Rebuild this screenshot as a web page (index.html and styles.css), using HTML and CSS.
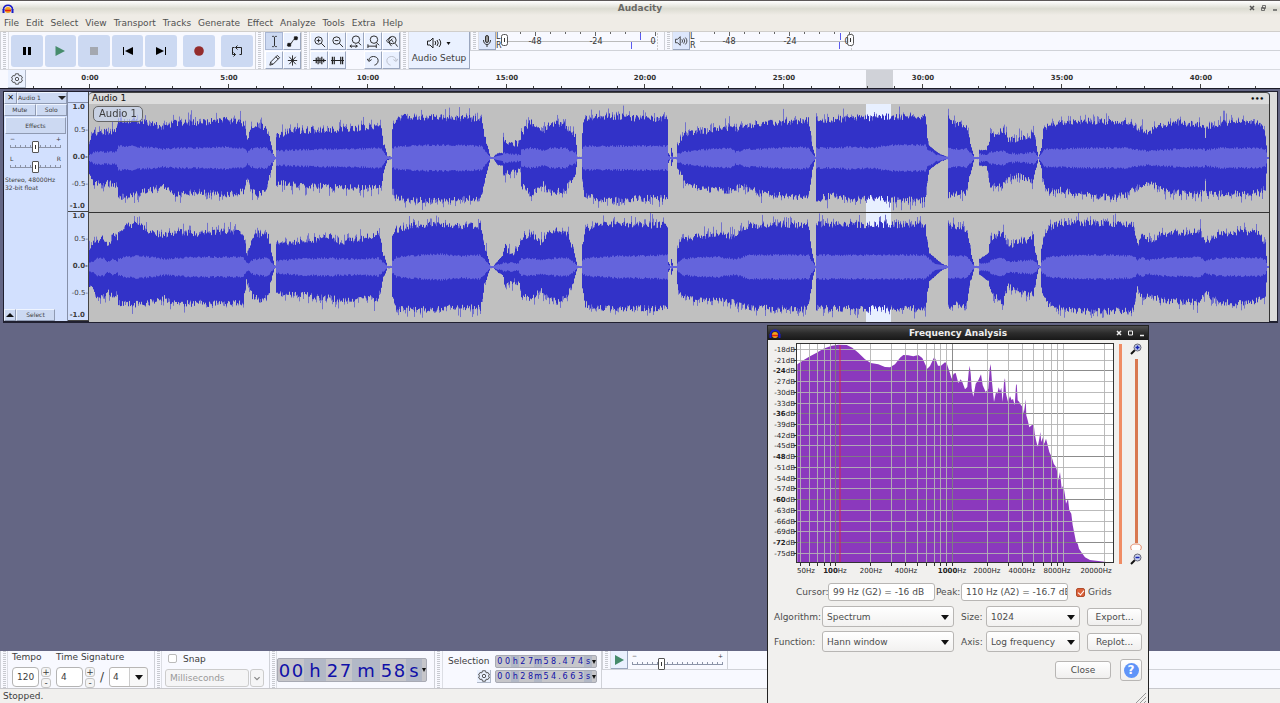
FILE: index.html
```html
<!DOCTYPE html>
<html lang="en">
<head>
    <meta charset="UTF-8">
    <meta name="viewport" content="width=device-width, initial-scale=1.0">
    <title>Audacity</title>
    <link rel="stylesheet" href="styles.css">
</head>
<body>

<header class="titlebar">
    <svg class="logo" width="12" height="11" viewBox="0 0 12 11"><path d="M1.500 7C1 0.500 11 0.500 10.500 7" fill="none" stroke="#1a1ac8" stroke-width="1.500"/><path d="M0.500 6h2v4h-2zM9.500 6h2v4h-2z" fill="#1a1ac8"/><circle cx="6" cy="7" r="3" fill="#f5a31c"/><path d="M3 7.500h6" stroke="#e02010" stroke-width="1.500"/></svg>
    <h1>Audacity</h1>
    <div class="window-buttons">
        <svg width="28" height="8" viewBox="0 0 28 8" fill="none" stroke="#555" stroke-width="1"><path d="M1 2l4 4M5 2L1 6" stroke-width="1.500"/><path d="M13.500 1.500h3v3h-3zM12.500 3.500h3v3h-3z" stroke-width="0.800"/><path d="M24 6h4" stroke-width="1.400"/></svg>
    </div>
</header>

<nav class="menu">
    <button>File</button>
    <button>Edit</button>
    <button>Select</button>
    <button>View</button>
    <button>Transport</button>
    <button>Tracks</button>
    <button>Generate</button>
    <button>Effect</button>
    <button>Analyze</button>
    <button>Tools</button>
    <button>Extra</button>
    <button>Help</button>
</nav>

<div class="toolbars">
    <div class="grip"></div>
    <div class="transport">
        <div class="transport-group">
            <button aria-label="Pause"><svg width="12" height="12" viewBox="0 0 12 12"><path d="M2 2h3v8H2zM7 2h3v8H7z"/></svg></button>
            <button aria-label="Play"><svg width="12" height="12" viewBox="0 0 12 12"><path d="M1.500 1L11 6l-9.500 5z" fill="#468c6c"/></svg></button>
            <button aria-label="Stop"><svg width="12" height="12" viewBox="0 0 12 12"><path d="M2 2h8v8H2z" fill="#a4a8b0"/></svg></button>
            <button aria-label="Skip to start"><svg width="12" height="12" viewBox="0 0 12 12"><path d="M11 2v8L3 6zM1 2h1v8H1z"/></svg></button>
            <button aria-label="Skip to end"><svg width="12" height="12" viewBox="0 0 12 12"><path d="M1 2v8l8-4zM10 2h1v8h-1z"/></svg></button>
        </div>
        <button class="single" aria-label="Record"><svg width="12" height="12" viewBox="0 0 12 12"><circle cx="6" cy="6" r="4.800" fill="#942c2c"/></svg></button>
        <button class="single" aria-label="Loop"><svg width="12" height="12" viewBox="0 0 12 12" fill="none" stroke="#222"><path d="M3.500 2.500h-2v7h3M8.500 9.500h2v-7h-6"/><path d="M6.500 0.500l-2 2 2 2M2.500 7.500l2 2-2 2"/></svg></button>
    </div>
    <div class="grip"></div>
    <div class="tools two">
        <button class="on" aria-label="Selection tool"><svg viewBox="0 0 14 14"><path d="M4.500 1.500H6L7 2.500 8 1.500h1.500M7 2.500v9M4.500 12.500H6L7 11.500l1 1h1.500"/></svg></button>
        <button aria-label="Envelope tool"><svg viewBox="0 0 14 14"><path d="M1 11c6 1 5-8 12-8"/><path d="M2 9h3v3H2zM9 2h3v3H9z" fill="#111"/></svg></button>
        <button aria-label="Draw tool"><svg viewBox="0 0 14 14"><path d="M2 12l1-3.500 7-7 2.500 2.500-7 7zM8.500 3L11 5.500M3 9l2 2"/></svg></button>
        <button aria-label="Multi tool"><svg viewBox="0 0 14 14"><path d="M7 1.500v11M2 7h10M3.500 3l7 8M10.500 3l-7 8"/></svg></button>
    </div>
    <div class="grip"></div>
    <div class="tools five">
        <button aria-label="Zoom in"><svg viewBox="0 0 14 14"><circle cx="6" cy="6" r="4"/><path d="M9 9l4 4M4 6h4M6 4v4"/></svg></button>
        <button aria-label="Zoom out"><svg viewBox="0 0 14 14"><circle cx="6" cy="6" r="4"/><path d="M9 9l4 4M4 6h4"/></svg></button>
        <button aria-label="Fit selection"><svg viewBox="0 0 14 14"><circle cx="7.500" cy="5" r="4"/><path d="M10 8l3 3"/><path d="M1 12h8M3 10.500L1 12l2 1.500M7 10.500L9 12l-2 1.500"/></svg></button>
        <button aria-label="Fit project"><svg viewBox="0 0 14 14"><circle cx="7.500" cy="5" r="4"/><path d="M10 8l3 3M1 10v4M10 10v4M1 12h9"/></svg></button>
        <button aria-label="Zoom toggle"><svg viewBox="0 0 14 14"><circle cx="8" cy="5.500" r="4"/><path d="M11 9l2.500 3.500M6.500 2.500C1 5 0.500 7 4 8l4-4M4 8l3 4M7 5l2 3"/></svg></button>
        <button aria-label="Trim"><svg viewBox="0 0 14 14"><path d="M0 7h14M3.500 4v6M5.500 3v8M7.500 4v6M9.500 3v8M11.500 5v4" stroke-width="1.300"/></svg></button>
        <button aria-label="Silence"><svg viewBox="0 0 14 14"><path d="M0 7h14M1.500 3v8M3.500 3v8M10.500 3v8M12.500 3v8" stroke-width="1.300"/></svg></button>
        <span></span>
        <button aria-label="Undo"><svg viewBox="0 0 14 14"><path d="M2 7c0-6 10-5.500 10 0 0 3-2 4.500-4 5M0 5l2 3 3-2"/></svg></button>
        <button class="off" aria-label="Redo"><svg viewBox="0 0 14 14"><path d="M12 7C12 1 2 1.500 2 7c0 3 2 4.500 4 5M14 5l-2 3-3-2"/></svg></button>
    </div>
    <div class="grip"></div>
    <button class="audio-setup">
        <svg width="26" height="12" viewBox="0 0 26 12" fill="none" stroke="#222"><path d="M1.500 4H4l3-3v10L4 8H1.500zM9 4q1.500 2 0 4M11 3q2.500 3 0 6M13 2q3.500 4 0 8"/><path d="M20.500 5h4l-2 3z" fill="#111" stroke="none"/></svg>
        Audio Setup
    </button>
    <div class="meters">
        <div class="meter-row">
            <div class="grip"></div>
            <button class="meter-button" aria-label="Record meter"><svg width="12" height="12" viewBox="0 0 12 12" fill="none" stroke="#333"><rect x="4.500" y="0.500" width="3" height="7" rx="1.500" fill="#999"/><path d="M2.500 5c0 6 7 6 7 0M6 9.500V12"/></svg></button>
            <svg class="meter" width="168" height="18" id="recordMeter"></svg>
            <div class="grip"></div>
            <button class="meter-button" aria-label="Playback meter"><svg width="13" height="12" viewBox="0 0 15 12" fill="none" stroke="#333"><path d="M0.500 4H3l3-3v10L3 8H0.500zM8 4q1.500 2 0 4M10 3q2.500 3 0 6M12 2q3.500 4 0 8"/></svg></button>
            <svg class="meter" width="168" height="18" id="playMeter"></svg>
        </div>
    </div>
</div>

<div class="timeline">
    <button class="gear" aria-label="Timeline options"><svg width="12" height="12" viewBox="0 0 12 12" fill="none" stroke="#444" stroke-width="0.900"><path d="M4.500 0.800h3l.6 2 2 -.2 1.400 2.400-1.300 1 1.300 1-1.400 2.400-2-.2-.6 2h-3l-.6-2-2 .2L.5 7l1.300-1L.5 5l1.400-2.400 2 .2z"/><circle cx="6" cy="6" r="1.700"/></svg></button>
    <svg class="time-ruler" height="18" id="timeRuler"></svg>
</div>

<main class="workspace">
    <section class="track">
        <div class="panel">
            <div class="panel-row">
                <button class="close" aria-label="Close track">✕</button>
                <button class="name">Audio 1 <i class="down"></i></button>
            </div>
            <div class="panel-row mute">
                <button>Mute</button>
                <button>Solo</button>
            </div>
            <button class="effects">Effects</button>
            <div class="slider-row">
                <div class="ends"><span>−</span><span>+</span></div>
                <input type="range" aria-label="Gain" value="50">
            </div>
            <div class="slider-row">
                <div class="ends"><span>L</span><span>R</span></div>
                <input type="range" aria-label="Pan" value="50">
            </div>
            <p>Stereo, 48000Hz<br>32-bit float</p>
            <div class="panel-row bottom">
                <button class="collapse" aria-label="Collapse"><i class="up"></i></button>
                <button class="select">Select</button>
            </div>
        </div>
        <div class="scale">
            <div class="scale-head"></div>
            <ul class="amps"><li><b>1.0</b></li><li>0.5-</li><li><b>0.0-</b></li><li>-0.5-</li><li><b>-1.0</b></li></ul>
            <ul class="amps"><li><b>1.0</b></li><li>0.5-</li><li><b>0.0-</b></li><li>-0.5-</li><li><b>-1.0</b></li></ul>
        </div>
        <div class="clip">
            <div class="clip-head"><span>Audio 1</span><b>•••</b></div>
            <canvas id="left" height="108"></canvas>
            <canvas id="right" height="109"></canvas>
            <span class="badge">Audio 1</span>
        </div>
        <div class="track-end"></div>
    </section>
</main>

<footer class="bottom-bar">
    <div class="grip"></div>
    <div class="signature">
        <label for="tempo">Tempo</label>
        <label for="upper">Time Signature</label>
        <div class="spin">
            <input id="tempo" type="text" value="120">
            <div><button>+</button><button>-</button></div>
        </div>
        <div class="spin">
            <input id="upper" type="text" value="4">
            <div><button>+</button><button>-</button></div>
            <span class="slash">/</span>
            <div class="drop lower"><select aria-label="Lower time signature"><option>4</option></select></div>
        </div>
    </div>
    <div class="grip"></div>
    <div class="snap">
        <label><input type="checkbox"> Snap</label>
        <div class="snap-row">
            <select aria-label="Snap to" disabled><option>Milliseconds</option></select>
            <svg width="14" height="18" viewBox="0 0 14 18" fill="none" stroke="#888" stroke-width="1.500"><path d="M4 8l3 3 3-3"/></svg>
        </div>
    </div>
    <div class="grip"></div>
    <div class="time big" data-time="00h27m58s"></div>
    <div class="grip wide"></div>
    <div class="selection">
        <span>Selection</span>
        <div class="time small" data-time="00h27m58.474s"></div>
        <button class="gear" aria-label="Selection options"><svg width="12" height="12" viewBox="0 0 12 12" fill="none" stroke="#444" stroke-width="0.900"><path d="M4.500 0.800h3l.6 2 2 -.2 1.400 2.400-1.300 1 1.300 1-1.400 2.400-2-.2-.6 2h-3l-.6-2-2 .2L.5 7l1.300-1L.5 5l1.400-2.400 2 .2z"/><circle cx="6" cy="6" r="1.700"/></svg></button>
        <div class="time small" data-time="00h28m54.663s"></div>
    </div>
    <div class="play-speed">
        <div class="speed-row">
            <div class="grip"></div>
            <button aria-label="Play at speed"><svg width="11" height="12" viewBox="0 0 11 12"><path d="M1 1l9 5-9 5z" fill="#468c6c"/></svg></button>
            <div class="slider-row">
                <div class="ends"><span>−</span><span>+</span></div>
                <input type="range" aria-label="Playback speed" value="31">
            </div>
        </div>
    </div>
</footer>
<div class="status">Stopped.</div>

<section class="dialog" role="dialog" aria-labelledby="dialogTitle">
    <div class="dialog-title">
        <svg class="logo" width="12" height="11" viewBox="0 0 12 11"><path d="M1.500 7C1 0.500 11 0.500 10.500 7" fill="none" stroke="#1a1ac8" stroke-width="1.500"/><path d="M0.500 6h2v4h-2zM9.500 6h2v4h-2z" fill="#1a1ac8"/><circle cx="6" cy="7" r="3" fill="#f5a31c"/><path d="M3 7.500h6" stroke="#e02010" stroke-width="1.500"/></svg>
        <h2 id="dialogTitle">Frequency Analysis</h2>
        <svg width="28" height="8" viewBox="0 0 28 8" fill="none" stroke="#eee"><path d="M1 2l4 4M5 2L1 6" stroke-width="1.500"/><path d="M12.500 2h4v4h-4z"/><path d="M24 6.500h4" stroke-width="1.500"/></svg>
    </div>
    <div class="plot-row">
        <svg class="plot" width="346" height="238" viewBox="0 0 346 238" id="plot"></svg>
        <div class="pan-bar"></div>
        <div class="zoom-bar">
            <svg width="12" height="12" viewBox="0 0 12 12"><path d="M1 11l4-4" stroke="#111" stroke-width="2"/><circle cx="7.500" cy="4.500" r="3.500" fill="#ccd4ee" stroke="#667"/><path d="M5.500 4.500h4M7.500 2.500v4" stroke="#1522b0" stroke-width="1.500"/></svg>
            <div class="zoom-line"></div>
            <svg class="zoom-thumb" width="12" height="8" viewBox="0 0 12 8"><path d="M1.500 7C-1 2 3 1 6 1s7 1 4.500 6" fill="#fff" stroke="#e58a68"/></svg>
            <svg width="12" height="12" viewBox="0 0 12 12"><path d="M1 11l4-4" stroke="#111" stroke-width="2"/><circle cx="7.500" cy="4.500" r="3.500" fill="#ccd4ee" stroke="#667"/><path d="M5.500 4.500h4" stroke="#1522b0" stroke-width="1.500"/></svg>
        </div>
    </div>
    <form class="readout">
        <label for="cursor">Cursor:</label>
        <input id="cursor" type="text" value="99 Hz (G2) = -16 dB" readonly>
        <label for="peak">Peak:</label>
        <input id="peak" type="text" value="110 Hz (A2) = -16.7 dB" readonly>
        <label class="grids"><input type="checkbox" checked> Grids</label>
    </form>
    <form class="options">
        <label for="algorithm">Algorithm:</label>
        <div class="drop"><select id="algorithm"><option>Spectrum</option></select></div>
        <label for="size">Size:</label>
        <div class="drop"><select id="size"><option>1024</option></select></div>
        <button type="button">Export...</button>
        <label for="function">Function:</label>
        <div class="drop"><select id="function"><option>Hann window</option></select></div>
        <label for="axis">Axis:</label>
        <div class="drop"><select id="axis"><option>Log frequency</option></select></div>
        <button type="button">Replot...</button>
    </form>
    <div class="dialog-actions">
        <button>Close</button>
        <button class="help" aria-label="Help"><span>?</span></button>
    </div>
    <svg class="corner" width="12" height="12" viewBox="0 0 12 12" stroke="#999"><path d="M1 12L12 1M5 12l7-7M9 12l3-3"/></svg>
</section>

<script src="script.js"></script>
</body>
</html>
```
FILE: styles.css
```css
* {
    box-sizing: border-box;
}
body {
    margin: 0;
    height: 100vh;
    display: flex;
    flex-direction: column;
    overflow: hidden;
    position: relative;
    background: #f1f0ee;
    color: #3c3c3c;
    font: 9px/12px "DejaVu Sans", sans-serif;
}
button, input, select {
    font: inherit;
    color: inherit;
    margin: 0;
    padding: 0;
    border: 0;
    background: none;
}
button {
    display: flex;
    align-items: center;
    justify-content: center;
}
svg, canvas {
    display: block;
}
ul, p, h1, h2 {
    margin: 0;
    padding: 0;
    list-style: none;
}

/* window title and menu */
.titlebar {
    display: flex;
    align-items: center;
    height: 15px;
    padding: 0 3px 0 2px;
    border-top: 1px solid #5c5858;
    background: linear-gradient(#fff, #dcdcd2 55%, #efece6);
}
.titlebar h1 {
    flex: 1;
    text-align: center;
    font-size: 9px;
    color: #6a6a66;
    padding-left: 17px;
}
.menu {
    display: flex;
    gap: 7px;
    height: 17px;
    padding: 0 4px;
    background: #efece6;
    border-bottom: 1px solid #d0cecb;
    color: #505050;
}

/* toolbars */
.toolbars {
    display: flex;
    height: 38px;
    background: #f8f9ff;
    border-bottom: 1px solid #d8dae0;
}
.grip {
    width: 9px;
    flex: none;
    border-left: 1px solid #d0d2d8;
    border-right: 1px solid #dcdee4;
    background: repeating-linear-gradient(#c8cad0 0 1px, #f8f9ff 1px 2px) center / 3px 100% no-repeat;
}
.transport {
    display: flex;
    align-items: center;
    padding: 0 2px;
}
.transport button {
    height: 32px;
    border-radius: 3px;
    background: #ccd9f2;
}
.transport-group {
    display: flex;
    gap: 2px;
    width: 166px;
}
.transport-group button {
    flex: 1;
}
.transport .single {
    width: 32px;
    margin-left: 6px;
}
.tools {
    display: grid;
    grid-auto-rows: 18px;
    row-gap: 1px;
}
.two {
    grid-template-columns: repeat(2, 18px);
    margin-left: 1px;
}
.five {
    grid-template-columns: repeat(5, 18px);
}
.tools button {
    background: #eaf1ff;
    border: 1px solid #fff;
    border-right-color: #9aa6be;
    border-bottom-color: #9aa6be;
}
.tools .on {
    background: #ccd9f2;
    border-color: #a8b6d4;
}
.tools svg {
    width: 13px;
    height: 13px;
    fill: none;
    stroke: #222;
    stroke-width: 1;
}
.tools .off svg {
    stroke: #b8bcc8;
}
.audio-setup {
    width: 61px;
    flex-direction: column;
    gap: 3px;
    background: #eaf1ff;
    border-right: 1px solid #9aa6be;
    border-bottom: 1px solid #9aa6be;
}
.meters {
    flex: 1;
}
.meter-row {
    display: flex;
    height: 19px;
    border-bottom: 1px solid #d0d2d8;
}
.meter-button {
    width: 17px;
    background: #dde7fc;
    border-right: 1px solid #9aa6be;
    border-bottom: 1px solid #9aa6be;
}
.meter text, .time-ruler text {
    fill: #333;
}

/* timeline */
.timeline {
    display: flex;
    height: 19px;
    background: #f8f9ff;
    border-bottom: 1px solid #1c1c28;
}
.gear {
    background: #eaf1ff;
    border-right: 1px solid #b0b8c8;
    border-bottom: 1px solid #b0b8c8;
}
.timeline .gear {
    width: 18px;
    margin-left: 8px;
}
.time-ruler {
    flex: 1;
    overflow: hidden;
    font-size: 7px;
    font-weight: bold;
}

/* track */
.workspace {
    flex: 1;
    min-height: 0;
    padding: 2px 2px 0 3px;
    background: #646684;
}
.track {
    display: flex;
    height: 232px;
    border: 1px solid #202030;
    border-bottom-width: 2px;
    background: #d2e0fe;
}
.panel {
    width: 64px;
    display: flex;
    flex-direction: column;
    border-right: 1px solid #8690a8;
    font-size: 6px;
    line-height: 8px;
}
.panel button {
    background: #ccd9f2;
    border: 1px solid #eef4ff;
    border-right-color: #8f9ab2;
    border-bottom-color: #8f9ab2;
}
.panel-row {
    display: flex;
    height: 12px;
}
.panel-row .close {
    width: 13px;
    font-size: 8px;
    color: #111;
}
.panel-row .name {
    flex: 1;
    justify-content: space-between;
}
.mute button {
    flex: 1;
}
.down, .up {
    border: 4px solid transparent;
    border-top: 4px solid #222;
    border-bottom: 0;
}
.up {
    border-top: 0;
    border-bottom: 4px solid #111;
}
.panel .effects {
    height: 17px;
    margin: 1px 1px 0;
}
.slider-row {
    height: 20px;
    padding: 2px 6px 0 6px;
}
.ends {
    display: flex;
    justify-content: space-between;
    height: 6px;
    font-size: 6px;
    line-height: 6px;
}
input[type=range] {
    display: block;
    appearance: none;
    width: 100%;
    height: 12px;
    margin-top: -1px;
    background: repeating-linear-gradient(90deg, #8c94a8 0 1px, transparent 1px 5px) 0 4px / 100% 3px no-repeat, linear-gradient(#8c94a8, #8c94a8) 0 6px / 100% 1px no-repeat;
}
input[type=range]::-webkit-slider-thumb {
    appearance: none;
    width: 7px;
    height: 12px;
    border: 1px solid #555;
    border-radius: 1px;
    background: linear-gradient(#333, #333) center / 1px 4px no-repeat #fff;
}
.panel p {
    padding: 2px 0 0 1px;
    white-space: nowrap;
}
.panel .bottom {
    margin-top: auto;
}
.bottom .collapse {
    width: 12px;
}
.bottom .select {
    width: 39px;
}
.scale {
    width: 21px;
    font-size: 7px;
    line-height: 9px;
    border-right: 1px solid #444;
}
.scale-head {
    height: 11px;
    border-bottom: 1px solid #8690a8;
}
.amps {
    height: 109px;
    display: grid;
    grid-template-rows: 1fr 2fr 2fr 2fr 1fr;
    align-items: center;
    text-align: right;
    white-space: nowrap;
    border-bottom: 1px solid #444;
}
.amps li:first-child {
    align-self: start;
    padding-right: 3px;
}
.amps li:last-child {
    align-self: end;
    padding-right: 3px;
}
.clip {
    flex: 1;
    min-width: 0;
    position: relative;
    border-top: 1px solid #444;
    border-right: 1px solid #333;
    border-top-left-radius: 4px;
    border-top-right-radius: 4px;
    background: #dcdcdc;
}
.clip-head {
    display: flex;
    justify-content: space-between;
    height: 11px;
    line-height: 11px;
    padding: 0 5px 0 3px;
    color: #111;
}
.clip-head b {
    font-size: 7px;
    line-height: 12px;
}
.clip canvas {
    width: 100%;
}
#left {
    border-bottom: 1px solid #333;
    height: 109px;
}
.badge {
    position: absolute;
    left: 4px;
    top: 13px;
    padding: 0 5px;
    font-size: 10px;
    line-height: 14px;
    border: 1px solid #666;
    border-radius: 5px;
    background: rgba(204, 217, 242, 0.7);
}
.track-end {
    width: 7px;
    background: #dcdcdc;
}

/* lower toolbars */
.bottom-bar {
    display: flex;
    height: 38px;
    background: #f8f9ff;
    border-bottom: 1px solid #c8c8cc;
}
.bottom-bar > .grip {
    width: 8px;
}
.signature {
    display: grid;
    grid-template-columns: 44px 98px;
    grid-template-rows: 16px 20px;
    padding-left: 4px;
    width: 146px;
}
.spin {
    display: flex;
    gap: 2px;
}
.spin input {
    width: 27px;
    padding-left: 4px;
    border: 1px solid #b4b4b4;
    border-radius: 4px;
    background: #fff;
}
.spin > div:not(.drop) {
    display: flex;
    flex-direction: column;
    gap: 1px;
}
.spin button {
    width: 10px;
    flex: 1;
    line-height: 8px;
    border: 1px solid #c4c4c4;
    border-radius: 3px;
    background: #f4f4f4;
}
.slash {
    width: 10px;
    text-align: center;
    font-size: 12px;
    line-height: 20px;
}
.drop {
    position: relative;
    display: flex;
}
.drop::after {
    content: "";
    position: absolute;
    right: 5px;
    top: 50%;
    margin-top: -2px;
    border: 4px solid transparent;
    border-top: 5px solid #111;
    border-bottom: 0;
    pointer-events: none;
}
select {
    appearance: none;
    width: 100%;
    padding: 0 4px;
    border: 1px solid #b8b6b4;
    border-radius: 3px;
    background: linear-gradient(#fff, #f2f1f0);
}
.lower {
    width: 39px;
}
.lower select {
    padding: 0 3px;
    background: linear-gradient(90deg, #fff 19px, #ccc 19px 20px, #f8f8f8 20px);
}
.snap {
    width: 107px;
    padding: 0 5px 0 3px;
}
.snap label {
    display: flex;
    align-items: center;
    height: 15px;
    gap: 6px;
    padding-left: 3px;
}
input[type=checkbox] {
    appearance: none;
    width: 9px;
    height: 9px;
    border: 1px solid #bbb;
    border-radius: 2px;
    background: #fff;
}
.snap-row {
    display: flex;
    gap: 1px;
    height: 18px;
    margin-top: 3px;
}
.snap-row select, .snap-row svg {
    border: 1px solid #ccc;
    border-radius: 3px;
    color: #999;
    background: #f5f5f6;
    opacity: 1;
}
.snap-row svg {
    flex: none;
}
.time {
    display: flex;
    color: #1010a8;
    background: #c6c6ca;
    border: 1px solid #a8aab4;
    border-radius: 2px;
}
.time span {
    text-align: center;
}
.time .unit {
    background: #b2b8c6;
}
.time::after {
    content: "";
    align-self: center;
    border: 2px solid transparent;
    border-top: 4px solid #111;
    border-bottom: 0;
}
.big {
    width: 150px;
    height: 24px;
    margin: 7px 7px 0 0;
    font-size: 18px;
    line-height: 23px;
}
.big span {
    width: 13px;
}
.big .h {
    width: 22px;
}
.big .m {
    width: 28px;
}
.big .s {
    flex: 1;
}
.big::after, .small::after {
    margin-left: auto;
}
.bottom-bar > .wide {
    width: 9px;
}
.selection {
    display: grid;
    grid-template-columns: 1fr 102px;
    grid-template-rows: 13px 13px;
    gap: 2px 4px;
    width: 159px;
    padding: 4px 4px 0 5px;
    border-right: 1px solid #d0d2d8;
}
.selection .gear {
    width: 14px;
    justify-self: end;
}
.small {
    font-size: 8px;
    line-height: 12px;
}
.small span {
    width: 8px;
}
.small .dot {
    width: 4px;
}
.play-speed {
    flex: 1;
}
.speed-row {
    display: flex;
    height: 19px;
    border-bottom: 1px solid #d0d2d8;
}
.speed-row > button {
    width: 17px;
    background: #eaf1ff;
    border-right: 1px solid #9aa6be;
    border-bottom: 1px solid #9aa6be;
}
.speed-row .slider-row {
    width: 100px;
    height: 18px;
    padding: 2px 4px 0;
    border-right: 1px solid #d0d2d8;
}
.status {
    height: 14px;
    padding-left: 3px;
    line-height: 15px;
}

/* frequency analysis window */
.dialog {
    position: absolute;
    left: 767px;
    top: 325px;
    bottom: 0;
    width: 382px;
    border: 1px solid #222;
    border-bottom: 0;
    background: #f1f0ee;
    color: #4c4c4c;
}
.dialog-title {
    display: flex;
    align-items: center;
    height: 14px;
    padding: 0 4px 0 1px;
    background: linear-gradient(#505050, #2c2c2c 50%, #181818);
    color: #eee;
}
.dialog-title h2 {
    flex: 1;
    text-align: center;
    font-size: 9px;
    line-height: 11px;
    padding-left: 19px;
}
.plot-row {
    display: flex;
    height: 238px;
}
.plot text {
    font-size: 7px;
    fill: #222;
}
.pan-bar {
    width: 3px;
    height: 220px;
    margin: 4px 0 0 5px;
    background: #f08c64;
}
.zoom-bar {
    display: flex;
    flex-direction: column;
    align-items: center;
    height: 222px;
    margin: 3px 0 0 8px;
}
.zoom-line {
    flex: 1;
    width: 3px;
    margin-top: 4px;
    background: #d87850;
}
.zoom-thumb {
    margin-bottom: 2px;
}
.readout {
    display: flex;
    align-items: center;
    height: 28px;
    padding: 0 10px 0 28px;
}
.readout input[type=text] {
    width: 107px;
    height: 18px;
    padding: 0 0 0 4px;
    border: 1px solid #b8b6b4;
    border-radius: 3px;
    background: #fff;
}
.readout label:first-child {
    width: 32px;
    white-space: nowrap;
}
#cursor + label {
    width: 26px;
    padding-left: 1px;
    white-space: nowrap;
}
.grids {
    display: flex;
    align-items: center;
    gap: 3px;
    margin-left: 8px;
}
.grids input {
    background: #dc6038;
    border-color: #b04c2c;
    position: relative;
}
.grids input::after {
    content: "";
    position: absolute;
    left: 2px;
    top: 0;
    width: 3px;
    height: 5px;
    border: solid #fff;
    border-width: 0 1px 1px 0;
    transform: rotate(40deg);
}
.options {
    display: grid;
    grid-template-columns: 48px 132px 7px 25px 94px 7px 1fr;
    row-gap: 4px;
    grid-auto-rows: 21px;
    padding: 0 6px;
    align-items: center;
}
.options .drop {
    height: 21px;
}
.options label {
    white-space: nowrap;
}
.options label[for=size], .options label[for=axis] {
    grid-column: 4;
}
.options button {
    grid-column: 7;
}
.options button, .dialog-actions button {
    height: 18px;
    border: 1px solid #b8b6b4;
    border-radius: 3px;
    background: linear-gradient(#fff, #f0efee);
}
.dialog-actions {
    display: flex;
    align-items: center;
    justify-content: flex-end;
    gap: 9px;
    padding: 7px 6px 0 0;
}
.dialog-actions button {
    width: 56px;
}
.dialog-actions .help {
    width: 22px;
    height: 22px;
}
.help span {
    width: 15px;
    height: 15px;
    flex: none;
    border-radius: 50%;
    background: #5f94f8;
    color: #fff;
    font-weight: bold;
    font-size: 12px;
    line-height: 15px;
}
.corner {
    position: absolute;
    right: 2px;
    bottom: -1px;
}
```
FILE: script.js
```js
let seed = 7;

function rand() {
    seed = (seed * 16807) % 2147483647;
    return seed / 2147483647;
}

// x, peak above zero, peak below zero, rms
const leftWave = [
    [0,18,14,3],[4,26,25,6],[14,27,26,6],[27,28,27,6],[28,30,30,9],[29,40,40,12],[40,37,37,12],[51,37,35,11],[66,35,32,10],[71,30,27,9],[76,32,30,9],[86,36,38,10],[111,36,34,10],[136,39,38,11],[154,35,34,10],[158,22,20,6],[161,28,33,9],[168,34,38,10],[177,31,33,10],[181,17,16,7],[184,4,4,3],[186,1,1,1],[187,23,25,7],[201,28,26,8],
    [244,29,30,9],[266,30,30,9],[291,34,31,10],[294,17,15,6],[298,2,2,1],[302,1,1,1],[303,30,30,9],[305,38,39,11],[316,42,43,12],[351,41,43,13],[392,40,40,12],[396,20,20,6],[401,1,1,1],[404,1,1,1],[408,5,7,2],[413,5,8,3],[414,20,18,5],[421,15,15,4],[431,16,13,3],[432,25,28,8],[441,37,37,10],[454,26,27,8],[461,36,35,10],[476,33,33,10],[481,25,24,7],[486,25,18,6],[488,1,1,1],[492,1,1,1],
    [493,25,25,9],[495,41,38,12],[511,42,42,12],[531,42,43,12],[551,40,41,12],[578,40,41,12],[579,5,5,2],[581,1,1,1],[582,10,8,2],[584,1,1,1],[587,1,1,1],[588,15,12,4],[594,24,20,6],[601,27,28,7],[621,28,32,9],[641,31,33,10],[646,29,30,6],[656,33,30,9],[671,35,36,9],[711,38,40,11],[719,38,38,10],[723,12,12,4],[726,1,1,1],
    [727,41,42,10],[741,38,38,10],[761,41,42,11],[781,41,40,10],[801,42,42,13],[836,42,43,13],[838,22,22,9],[840,12,12,8],[846,7,7,4],[853,3,3,2],[858,1,1,1],[859,40,38,10],[866,34,36,9],[877,34,35,9],[881,14,16,5],[885,1,1,1],[889,1,1,1],[890,8,8,4],[897,8,8,3],[901,24,27,6],[914,28,28,7],[919,20,20,5],[929,18,18,4],[944,25,25,6],[947,12,10,3],[949,1,1,1],
    [952,10,10,4],[954,28,25,8],[959,34,34,9],[971,36,33,9],[991,38,37,10],[1021,37,40,10],[1036,36,38,10],[1051,30,28,8],[1058,26,25,7],[1071,33,31,8],[1091,36,36,9],[1115,34,36,9],[1116,18,18,6],[1117,32,36,8],[1131,36,36,10],[1156,37,37,10],[1171,35,35,10],[1176,25,30,8],[1178,1,1,1],[1181,1,1,1]
];
const rightWave = [
    [0,18,20,4],[3,23,24,5],[8,26,31,9],[14,30,31,9],[19,20,25,5],[23,33,30,9],[28,30,28,6],[29,36,36,8],[36,41,38,10],[48,44,38,11],[61,36,36,10],[76,32,32,8],[86,36,37,9],[111,34,37,10],[141,37,38,10],[154,35,36,10],[157,14,12,4],[161,20,22,5],[163,32,30,7],[173,34,34,9],[179,32,30,9],[182,15,12,5],[185,2,2,1],[186,1,1,1],[187,24,27,6],[211,26,28,8],
    [241,31,32,9],[251,25,33,8],[271,29,33,8],[289,34,32,9],[293,18,14,5],[298,1,1,1],[302,1,1,1],[303,30,30,6],[307,38,42,10],[321,42,43,11],[351,43,43,13],[371,41,40,11],[391,42,42,12],[396,18,15,6],[401,1,1,1],[404,1,1,1],[409,7,6,3],[413,11,8,4],[415,22,18,4],[421,13,14,4],[429,18,16,4],[432,30,28,8],[441,34,32,9],[452,25,25,7],[458,34,30,8],[467,37,36,9],[478,33,30,9],[484,18,15,5],[488,1,1,1],[492,1,1,1],
    [493,22,22,6],[496,38,38,9],[511,44,42,10],[531,44,42,11],[551,42,42,11],[578,43,42,12],[579,5,5,2],[581,1,1,1],[582,8,8,2],[584,1,1,1],[587,1,1,1],[588,20,20,4],[592,28,30,8],[611,32,34,10],[631,33,35,10],[644,30,35,8],[646,34,36,8],[661,42,42,12],[691,43,42,12],[713,42,42,12],[719,44,40,12],[723,13,13,5],[726,1,1,1],
    [727,43,42,12],[836,43,42,12],[838,24,24,10],[840,14,14,8],[846,9,9,3],[853,3,3,2],[858,1,1,1],[859,44,41,12],[866,40,38,11],[877,38,39,11],[881,16,16,6],[885,1,1,1],[889,1,1,1],[890,8,8,4],[899,14,14,4],[901,28,26,7],[914,36,36,9],[918,22,20,5],[929,25,25,6],[944,30,28,7],[947,12,12,4],[949,2,2,1],
    [951,1,1,1],[952,20,22,5],[954,28,30,7],[959,40,38,10],[971,44,42,11],[991,45,45,12],[1021,44,45,12],[1044,43,44,11],[1048,22,20,7],[1053,35,32,9],[1061,25,28,7],[1071,34,34,9],[1111,36,36,10],[1116,24,24,6],[1119,26,28,7],[1129,34,36,9],[1156,36,37,9],[1171,34,33,9],[1176,22,30,7],[1178,1,1,1],[1181,1,1,1]
];

function drawWave(id, points) {
    const canvas = document.getElementById(id);
    canvas.width = canvas.clientWidth;
    const ctx = canvas.getContext('2d');
    const zero = 54;
    ctx.fillStyle = '#c0c0c0';
    ctx.fillRect(0, 0, canvas.width, canvas.height);
    ctx.fillStyle = '#e8f0ff';
    ctx.fillRect(777, 0, 25, canvas.height);
    let k = 0;
    for (let x = 0; x < Math.min(canvas.width, 1181); x++) {
        while (k < points.length - 2 && points[k + 1][0] <= x) {
            k++;
        }
        const a = points[k];
        const b = points[k + 1];
        const t = Math.min(1, (x - a[0]) / (b[0] - a[0]));
        const [up, down, rms] = [1, 2, 3].map(i => a[i] + (b[i] - a[i]) * t);
        const rough = up > 14;
        const noise = rough ? 7 : 0.8;
        const top = Math.max(0.6, up + noise * (rand() - 0.6));
        const bottom = Math.max(0.6, down + noise * (rand() - 0.6));
        // thin transient peaks
        ctx.fillStyle = '#7272cc';
        if (rough && rand() < 0.35) {
            const peak = 1 + rand() * rand() * 11;
            ctx.fillRect(x, zero - top - peak, 1, top + peak);
        }
        if (rough && rand() < 0.35) {
            ctx.fillRect(x, zero, 1, bottom + 1 + rand() * rand() * 9);
        }
        ctx.fillStyle = '#3232c8';
        ctx.fillRect(x, zero - top, 1, top + bottom);
        const r = Math.max(0.5, rms + (rms > 3 ? rand() * 2 - 1 : 0));
        ctx.fillStyle = '#6464dc';
        ctx.fillRect(x, zero - r, 1, r * 2);
    }
}

function drawTimeRuler() {
    let out = '<rect x="840" y="0" width="27" height="18" fill="#d0d2d8"/>';
    for (let i = -2; i < 43; i++) {
        const x = Math.round(64 + i * 27.77);
        const h = i % 5 === 0 ? 4 : 2;
        out += `<path d="M${x - 0.5} ${18 - h}v${h}" stroke="#444"/>`;
        if (i >= 0 && i % 5 === 0) {
            out += `<text x="${x}" y="10" text-anchor="middle">${i}:00</text>`;
        }
    }
    document.getElementById('timeRuler').innerHTML = out;
}

function drawMeter(id, thumb, peaks) {
    let out = '<path d="M10 9.5H160" stroke="#bbb"/><path d="M161.500 1v17" stroke="#ccc" stroke-dasharray="2 1"/>';
    for (let i = 0; i < 10; i++) {
        out += `<path d="M${24.5 + i * 15} 0v${i % 4 === 1 ? 4 : 2}" stroke="#666"/>`;
    }
    out += '<g font-size="8"><text x="0" y="7">L</text><text x="0" y="16">R</text></g>';
    [['-48', 39], ['-24', 100], ['0', 157]].forEach(([label, x]) => {
        out += `<text x="${x}" y="12" font-size="8" text-anchor="middle">${label}</text>`;
    });
    out += `<path d="M${peaks[0]} 1v7M${peaks[1]} 10v7" stroke="#5a5af0"/>`;
    out += `<rect x="${thumb}.5" y="2.500" width="6" height="11" rx="2" fill="#fff" fill-opacity="0.800" stroke="#555"/><path d="M${thumb + 3.5} 6v4" stroke="#333"/>`;
    document.getElementById(id).innerHTML = out;
}

// spectrum outline, three units to a pixel
const spectrum = '97,127 115,115 135,103 155,92 175,80 200,71 220,68 245,69 262,77 280,92 300,112 317,123 340,127 360,135 375,136 390,127 405,107 415,99 430,100 445,103 460,99 472,108 482,130 487,140 495,132 503,115 508,105 513,115 519,131 528,131 540,121 545,124 552,145 560,170 566,155 572,153 580,183 587,172 592,180 600,202 607,195 611,150 614,131 617,155 620,200 625,224 632,185 640,175 648,157 653,190 662,210 670,200 674,140 677,126 681,180 687,240 693,210 697,215 701,196 705,208 709,197 713,240 717,180 720,168 723,215 729,240 735,222 740,235 744,230 749,250 753,190 755,186 758,235 763,240 768,250 773,255 776,275 779,255 782,232 784,280 788,295 793,316 800,310 806,305 809,335 813,355 818,374 823,350 826,330 829,360 834,345 838,365 843,350 848,370 853,390 860,405 866,425 873,435 877,450 880,475 885,450 890,500 895,490 900,520 903,545 909,530 913,565 919,575 923,610 929,640 933,660 938,665 942,680 950,692 960,706 975,714 1000,717 1030,721 1045,723 97,723';

function drawPlot() {
    const hz = f => Math.round(67 + 35.16 * Math.log2(f / 100)) + 0.5;
    const pts = spectrum.split(' ').map(p => {
        const [x, y] = p.split(',').map(Number);
        return `${(x / 3 - 3).toFixed(1)},${(y / 3 - 18).toFixed(1)}`;
    }).join(' ');
    let out = `<rect x="29" y="4" width="317" height="219" fill="#fff"/><polygon points="${pts}" fill="#8b39bd"/>`;
    for (let i = 0; i < 20; i++) {
        const db = -18 - i * 3;
        const y = Math.round(9 + i * 10.72) + 0.5;
        const main = db % 12 === 0;
        out += `<path d="M29 ${y}H345" stroke="${main ? '#808080' : '#b4b4b4'}" stroke-opacity="0.900"/><path d="M26 ${y}h3" stroke="#333"/>`;
        out += `<text x="27" y="${y + 2}" text-anchor="end"><tspan font-weight="${main ? 'bold' : 'normal'}">${db}</tspan>dB</text>`;
    }
    [50, 60, 70, 80, 90, 100, 200, 300, 400, 500, 600, 700, 800, 900, 1000, 2000, 3000, 4000, 5000, 6000, 7000, 8000, 9000, 20000].forEach(f => {
        const main = f === 100 || f === 1000;
        out += `<path d="M${hz(f)} 4V223" stroke="${main ? '#808080' : '#b4b4b4'}" stroke-opacity="0.900"/><path d="M${hz(f)} 223v3" stroke="#333"/>`;
    });
    out += '<path d="M72 5V223" stroke="#d8284c"/><rect x="28.500" y="3.500" width="317" height="219" fill="none" stroke="#333"/>';
    [['50', 38], ['100', 67], ['200', 103], ['400', 138], ['1000', 184], ['2000', 219], ['4000', 254], ['8000', 289], ['20000', 328]].forEach(([f, x]) => {
        const weight = f === '100' || f === '1000' ? 'bold' : 'normal';
        out += `<text x="${x}" y="233" text-anchor="middle"><tspan font-weight="${weight}">${f}</tspan>Hz</text>`;
    });
    document.getElementById('plot').innerHTML = out;
}

document.querySelectorAll('.time').forEach(el => {
    for (const ch of el.dataset.time) {
        const span = document.createElement('span');
        span.textContent = ch;
        if (/[hms]/.test(ch)) {
            span.className = 'unit ' + ch;
        } else if (ch === '.') {
            span.className = 'dot';
        }
        el.appendChild(span);
    }
});

drawWave('left', leftWave);
drawWave('right', rightWave);
drawTimeRuler();
drawMeter('recordMeter', 5, [144.5, 135.5]);
drawMeter('playMeter', 157, [150.5, 149.5]);
drawPlot();
```
